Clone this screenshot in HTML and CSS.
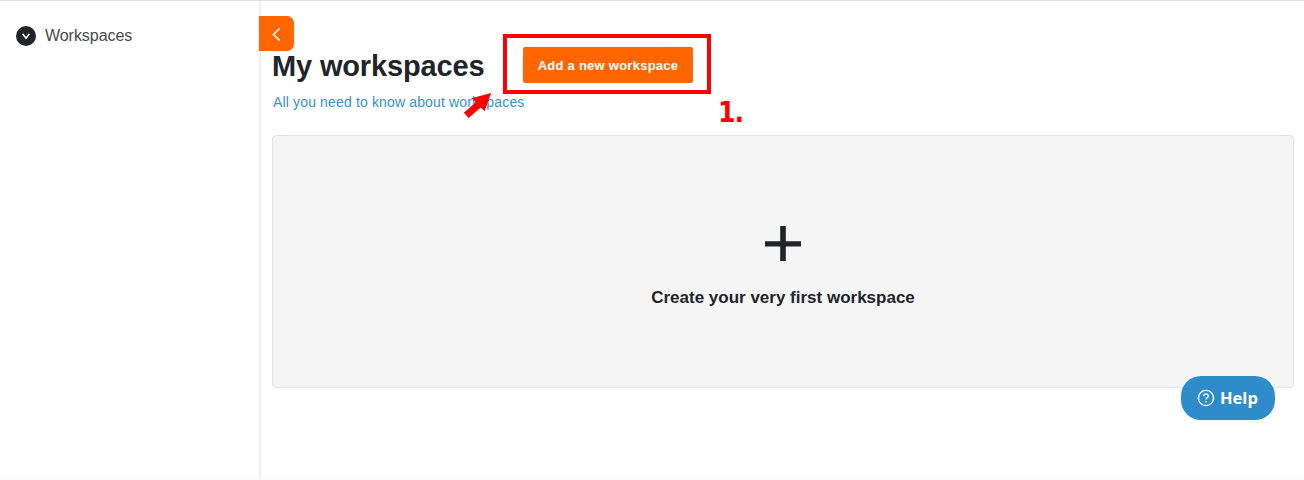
FILE: index.html
```html
<!DOCTYPE html>
<html lang="en">
<head>
<meta charset="utf-8">
<title>My workspaces</title>
<link rel="stylesheet" href="styles.css">
</head>
<body>
<div class="app">
  <aside class="sidebar">
    <a class="nav-item">
      <svg class="nav-icon" width="20" height="20" viewBox="0 0 20 20"><circle cx="10" cy="10" r="10" fill="#212529"/><path d="M6.6 7.8L10 12.2L13.4 7.8" fill="none" stroke="#fff" stroke-width="1.5"/></svg>
      <span class="nav-label">Workspaces</span>
    </a>
  </aside>
  <main class="content">
    <button class="collapse" aria-label="Collapse"><svg width="34" height="34" viewBox="0 0 34 34"><path d="M20.8 11.2L14.4 17.4L20.8 23.6" fill="none" stroke="#fff" stroke-width="1.5"/></svg></button>
    <header class="heading">
      <h1 class="title">My workspaces</h1>
      <button class="add"><span>Add a new workspace</span></button>
    </header>
    <a class="learn"><span>All you need to know about workspaces</span></a>
    <section class="empty">
      <svg class="plus" width="36" height="36" viewBox="0 0 36 36"><path d="M15.2 0h5.6v15.2H36v5.4H20.8V35h-5.6V20.6H0v-5.4h15.2z" fill="#212529"/></svg>
      <span class="empty-text">Create your very first workspace</span>
    </section>
  </main>
  <div class="highlight"></div>
  <svg class="arrow" width="30" height="28" viewBox="0 0 30 28"><path d="M28.2 2L21.6 20.3L17.8 16.4L5.7 27L.8 21.8L13 11.3L8.3 7.2z" fill="#f00"/></svg>
  <span class="step">1.</span>
  <button class="help"><svg width="18" height="18" viewBox="0 0 18 18" fill="none" stroke="#fff"><circle cx="9" cy="9" r="7.6" stroke-width="1.4"/><path d="M6.8 7.2C6.8 4.2 11.3 4.3 11.3 7C11.3 8.8 9 8.8 9 10.6" stroke-width="1.3"/><path d="M9 12v1.5" stroke-width="1.4"/></svg><span>Help</span></button>
</div>
</body>
</html>
```
FILE: styles.css
```css
* { box-sizing: border-box; }
body { margin: 0; background: #fff; color: #212529; font-family: "Liberation Sans", Arial, sans-serif; }
button { border: 0; padding: 0; font-family: inherit; color: #fff; }
.app { position: relative; display: flex; height: 480px; border-top: 1px solid #d8dee9; border-bottom: 1px solid #f9f9f9; overflow: hidden; }
.sidebar { width: 261px; flex: none; border-right: 2px solid #edf0f3; padding: 24px 16px; }
.nav-item { display: flex; align-items: center; gap: 9px; height: 22px; }
.nav-label { font-size: 16px; letter-spacing: -.05px; color: #44484c; line-height: 20px; }
.content { flex: 1; padding: 45px 10px 0 11px; }
.collapse { position: absolute; left: 259px; top: 15px; width: 35px; height: 35px; background: #f60; border-radius: 0 7px 7px 0; }
.collapse svg { display: block; }
.heading { display: flex; align-items: center; height: 38px; }
.title { width: 251px; margin: 0; padding-top: 2px; font-size: 29px; line-height: 38px; font-weight: 700; letter-spacing: -.15px; white-space: nowrap; }
.add { width: 170px; height: 36px; background: #f60; border-radius: 2px; font-size: 13px; font-weight: 700; letter-spacing: .25px; white-space: nowrap; }
.learn { display: block; margin-top: 8px; height: 20px; line-height: 20px; font-size: 14px; letter-spacing: .15px; color: #3490d1; padding-left: 1px; }
.empty { margin-top: 23px; height: 253px; background: #f5f5f6; border: 1px solid #dfe2e6; border-radius: 4px; display: flex; flex-direction: column; align-items: center; padding-top: 90px; }
.empty-text { margin-top: 25px; font-size: 17px; line-height: 22px; font-weight: 700; }
.highlight { position: absolute; left: 503px; top: 33px; width: 208px; height: 60px; border: 4px solid #f00; }
.arrow { position: absolute; left: 463px; top: 90px; }
.step { position: absolute; left: 718px; top: 95px; font: 700 28px/34px "DejaVu Sans Condensed", "DejaVu Sans", sans-serif; letter-spacing: -1px; color: #f00; }
.help { position: absolute; left: 1181px; top: 375px; width: 94px; height: 44px; border-radius: 20px; background: #2f8ccb; display: flex; align-items: center; padding-left: 16px; gap: 5px; font: 700 16.5px/22px "Open Sans", sans-serif; }
```
